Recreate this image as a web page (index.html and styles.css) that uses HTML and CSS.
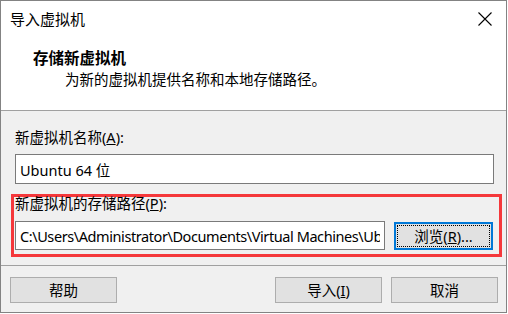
FILE: index.html
```html
<!DOCTYPE html>
<html lang="zh-CN">
<head>
    <meta charset="UTF-8">
    <meta name="viewport" content="width=device-width, initial-scale=1.0">
    <title>导入虚拟机</title>
    <link rel="stylesheet" href="styles.css">
</head>
<body>
    <div class="dialog">
        <!-- Title bar and wizard header -->
        <div class="head">
            <div class="titlebar">
                <span class="title">导入虚拟机</span>
                <svg class="close" width="14" height="14" viewBox="0 0 14 14">
                    <path d="M0.5 0.5 L13.5 13.5 M13.5 0.5 L0.5 13.5" stroke="#000" stroke-width="1.1" fill="none"/>
                </svg>
            </div>
            <div class="intro">
                <h1>存储新虚拟机</h1>
                <p>为新的虚拟机提供名称和本地存储路径。</p>
            </div>
        </div>

        <!-- Form -->
        <div class="content">
            <label class="field-label" for="vmName">新虚拟机名称(<u>A</u>):</label>
            <input class="text-input" id="vmName" type="text" value="Ubuntu 64 位">

            <div class="path-group">
                <label class="field-label small" for="vmPath">新虚拟机的存储路径(<u>P</u>):</label>
                <div class="path-row">
                    <input class="text-input path-input" id="vmPath" type="text" value="C:\Users\Administrator\Documents\Virtual Machines\Ubuntu 64 位">
                    <button class="btn btn-focus">浏览(<u>R</u>)...</button>
                </div>
            </div>
        </div>

        <!-- Buttons -->
        <div class="footer">
            <button class="btn">帮助</button>
            <button class="btn push-right">导入(<u>I</u>)</button>
            <button class="btn">取消</button>
        </div>
    </div>
</body>
</html>
```

FILE: styles.css
```css
* {
    margin: 0;
    padding: 0;
    box-sizing: border-box;
}
body {
    background: #fff;
    font-family: "Noto Sans", "Noto Sans CJK SC", sans-serif;
    font-size: 14.5px;
    color: #000;
}
.dialog {
    width: 507px;
    height: 313px;
    border: 1px solid #838383;
    background: #f0f0f0;
    display: flex;
    flex-direction: column;
}
.head {
    height: 110px;
    background: #fff;
    border-bottom: 1px solid #a0a0a0;
}
.titlebar {
    height: 38px;
    display: flex;
    align-items: center;
    justify-content: space-between;
    padding: 0 14px 2px 9px;
}
.title {
    font-size: 15px;
    line-height: 20px;
}
.close {
    display: block;
    margin-bottom: 1px;
}
.intro {
    padding: 9px 0 0 32px;
}
.intro h1 {
    font-size: 15.5px;
    font-weight: bold;
    line-height: 20px;
}
.intro p {
    line-height: 22px;
    padding-left: 32px;
}
.content {
    padding: 16px 12px 8px 14px;
    display: flex;
    flex-direction: column;
}
.field-label {
    display: block;
    line-height: 20px;
    margin-bottom: 7px;
}
.field-label.small {
    line-height: 12px;
    margin-bottom: 12px;
}
.text-input {
    display: block;
    width: 100%;
    height: 30px;
    border: 1px solid #7a7a7a;
    background: #fff;
    padding: 0 4px;
    font-family: "Noto Sans", "Noto Sans CJK SC", sans-serif;
    font-size: 14.5px;
    color: #000;
    outline: none;
}
.path-group {
    margin: 10px -8px 0 -4px;
    border: 3px solid #f5383b;
    padding: 0 6px 4px 1px;
}
.path-row {
    display: flex;
    gap: 9px;
}
.path-input {
    width: 370px;
    height: 29px;
    letter-spacing: -0.42px;
}
.btn {
    width: 107px;
    height: 26px;
    background: #e1e1e1;
    border: 1px solid #adadad;
    font-family: "Noto Sans", "Noto Sans CJK SC", sans-serif;
    font-size: 14.5px;
    color: #000;
    line-height: 20px;
}
.btn-focus {
    width: 99px;
    height: 28px;
    margin-top: 1px;
    border: 2px solid #0078d7;
    outline: 1px dotted #000;
    outline-offset: -4px;
}
.footer {
    border-top: 1px solid #a0a0a0;
    padding: 11px 8px 9px 9px;
    display: flex;
    gap: 9px;
}
.push-right {
    margin-left: auto;
}
```
